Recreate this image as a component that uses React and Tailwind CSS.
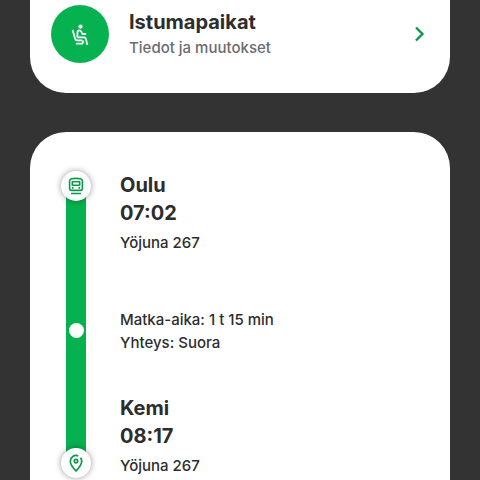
const stops = [
  { station: "Oulu", time: "07:02", train: "Yöjuna 267" },
  { station: "Kemi", time: "08:17", train: "Yöjuna 267" },
];

const SeatIcon = () => (
  <svg
    className="size-6"
    viewBox="-1 0 24 24"
    fill="none"
    stroke="#fff"
    strokeWidth="1.8"
    aria-hidden="true"
  >
    <circle cx="11.500" cy="4.600" r="2.100" fill="#fff" stroke="none" />
    <path d="M3.600 8l2.500 8.700c.3 1.100 1 1.700 2.200 1.700h5" />
    <path d="M8.400 15.500v-4.700c0-1.600.8-2.500 2.100-2.500 1.200 0 1.700.8 2.200 2l.8 1.700h3.600" />
    <path d="M8.400 15.300h6.900c.9 0 1.300.4 1.500 1.300l1.600 6.400" />
    <path d="M14 18.500v1.200c0 1-.6 1.900-1.600 1.900H7" />
  </svg>
);

const TrainIcon = () => (
  <svg
    className="size-5"
    viewBox="0 0 20 20"
    fill="none"
    stroke="#0a9a45"
    strokeWidth="1.600"
    aria-hidden="true"
  >
    <path d="M5.500 2.800c3-.5 6-.5 9 0 1.200.2 1.900 1 1.900 2.200v7.300c0 1.300-.8 2.100-2.100 2.100H5.700c-1.300 0-2.100-.8-2.100-2.100V5c0-1.200.7-2 1.900-2.200z" />
    <rect x="6.300" y="5.800" width="7.400" height="3.400" rx=".5" />
    <path d="M6 11.900h1.500M12.500 11.900H14M5 17.500h10" />
  </svg>
);

const PinIcon = () => (
  <svg
    className="size-5"
    viewBox="0 0 20 20"
    fill="none"
    stroke="#0a9a45"
    strokeWidth="1.700"
    aria-hidden="true"
  >
    <path d="M12.200 2.900A5.700 5.700 0 0 0 4.300 8.200c0 3.400 2.900 6.800 5.700 9.600 2.800-2.800 5.700-6.200 5.700-9.600 0-1.400-.4-2.500-1.200-3.500" />
    <circle cx="10" cy="8.100" r="1.700" />
  </svg>
);

const Stop = ({ station, time, train }) => (
  <div>
    <h2 className="text-xl font-bold leading-7">{station}</h2>
    <p className="text-xl font-bold leading-7">{time}</p>
    <p className="mt-1">{train}</p>
  </div>
);

const StopMarker = ({ children }) => (
  <div className="z-10 flex size-[30px] shrink-0 items-center justify-center rounded-full bg-white shadow-[0_0_6px_rgba(0,0,0,0.4)]">
    {children}
  </div>
);

const App = () => {
  return (
    <main className="flex h-screen flex-col gap-[39px] overflow-hidden bg-[#333333] px-[30px] font-['Inter','Liberation_Sans',sans-serif] text-[#2d2d2d]">
      <a
        href="#istumapaikat"
        className="flex shrink-0 items-center gap-5 rounded-b-[36px] bg-white pt-[5px] pr-[18px] pb-[30px] pl-[21px]"
      >
        <span className="flex size-[58px] shrink-0 items-center justify-center rounded-full bg-[#06b14f]">
          <SeatIcon />
        </span>
        <span className="flex-1">
          <span className="block text-xl font-bold leading-7">
            Istumapaikat
          </span>
          <span className="block text-[15px] font-medium leading-6 text-[#6b6b70]">
            Tiedot ja muutokset
          </span>
        </span>
        <svg
          className="size-6"
          viewBox="0 0 24 24"
          fill="none"
          stroke="#0a9a45"
          strokeWidth="2.4"
          aria-hidden="true"
        >
          <path d="M8 5.500l6.500 6.500L8 18.500" />
        </svg>
      </a>

      <section className="flex flex-1 items-start gap-[29px] rounded-t-[36px] bg-white px-[31px] pt-[39px]">
        <div className="flex flex-col items-center">
          <StopMarker>
            <TrainIcon />
          </StopMarker>
          <div className="-my-4 flex h-[279px] w-5 items-center justify-center bg-[#06b14f] pt-3">
            <div className="size-[15px] rounded-full bg-white" />
          </div>
          <StopMarker>
            <PinIcon />
          </StopMarker>
        </div>
        <div className="flex flex-col text-[15px] font-medium leading-[23px]">
          <Stop {...stops[0]} />
          <div className="mt-[54px] mb-10">
            <p>Matka-aika: 1 t 15 min</p>
            <p>Yhteys: Suora</p>
          </div>
          <Stop {...stops[1]} />
        </div>
      </section>
    </main>
  );
};

export default App;
